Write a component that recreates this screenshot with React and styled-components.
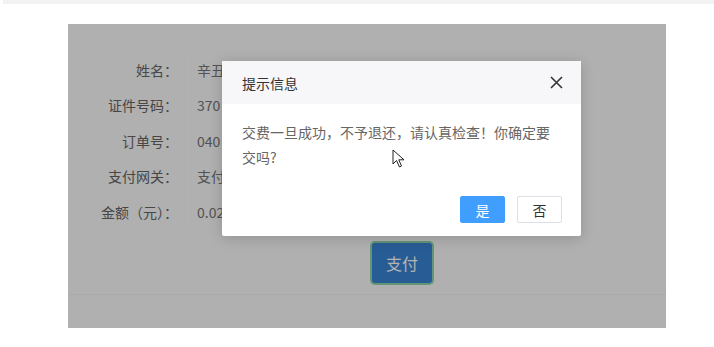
import React from "react";
import styled, { createGlobalStyle } from "styled-components";

const Global = createGlobalStyle`
  html, body {
    margin: 0;
    padding: 0;
    background: #fff;
    font-family: "Noto Sans CJK SC", "Noto Sans", sans-serif;
  }
`;

const TopStrip = styled.div`
  height: 4px;
  margin-left: 3px;
  background: #f2f2f2;
`;

const Panel = styled.div`
  position: relative;
  margin: 20px 0 0 68px;
  width: 598px;
  height: 304px;
  background: #fcfcfc;
  overflow: hidden;
`;

const Form = styled.div`
  display: grid;
  grid-template-columns: 100px 34px;
  grid-auto-rows: 35.5px;
  margin: 28px 0 0 20px;
`;

const Label = styled.div`
  display: flex;
  align-items: center;
  justify-content: flex-end;
  padding-right: 10px;
  font-size: 14px;
  color: #666;
  white-space: nowrap;
`;

const Value = styled.div`
  display: flex;
  align-items: center;
  padding-left: 8px;
  border-left: 1px solid #fff;
  font-size: 14px;
  color: #777;
  white-space: nowrap;
`;

const PayRow = styled.div`
  display: flex;
  padding: 13px 0 0 304px;
`;

const PayButton = styled.button`
  width: 60px;
  height: 40px;
  border: none;
  border-radius: 3px;
  background: #3a84d4;
  box-shadow: 0 0 0 2px #8fd6ab;
  color: #fff;
  font-family: inherit;
  font-size: 16px;
`;

const Rule = styled.div`
  margin-top: 10px;
  height: 1px;
  background: #fff;
  box-shadow: 0 1px 0 #f4f4f4;
`;

const Mask = styled.div`
  position: absolute;
  inset: 0;
  background: rgba(0, 0, 0, 0.3);
`;

const Dialog = styled.div`
  position: absolute;
  left: 154px;
  top: 37px;
  width: 359px;
  background: #fff;
  border-radius: 2px;
  box-shadow: 0 2px 14px rgba(0, 0, 0, 0.18);
`;

const Header = styled.div`
  display: flex;
  align-items: center;
  justify-content: space-between;
  height: 43px;
  padding: 0 20px;
  background: #f7f7f9;
`;

const Title = styled.span`
  font-size: 14px;
  color: #333;
`;

const Close = styled.span`
  display: flex;
  margin-right: -2px;
`;

const Body = styled.div`
  padding: 16px 20px 0;
  font-size: 14px;
  line-height: 25px;
  color: #666;
`;

const Footer = styled.div`
  display: flex;
  justify-content: flex-end;
  gap: 12px;
  padding: 26px 19px 13px;
`;

const DialogButton = styled.button`
  width: 45px;
  height: 27px;
  padding: 0;
  border: 1px solid ${(p) => (p.$primary ? "#409eff" : "#dcdfe6")};
  border-radius: 2px;
  background: ${(p) => (p.$primary ? "#409eff" : "#fff")};
  color: ${(p) => (p.$primary ? "#fff" : "#333")};
  font-family: inherit;
  font-size: 14px;
`;

const Cursor = styled.svg`
  position: absolute;
  left: 324px;
  top: 125px;
`;

const rows = [
  ["姓名：", "辛丑"],
  ["证件号码：", "370"],
  ["订单号：", "040"],
  ["支付网关：", "支付"],
  ["金额（元）：", "0.02"],
];

export default function App() {
  return (
    <>
      <Global />
      <TopStrip />
      <Panel>
        <Form>
          {rows.map(([label, value]) => (
            <React.Fragment key={label}>
              <Label>{label}</Label>
              <Value>{value}</Value>
            </React.Fragment>
          ))}
        </Form>
        <PayRow>
          <PayButton>支付</PayButton>
        </PayRow>
        <Rule />
        <Mask />
        <Dialog>
          <Header>
            <Title>提示信息</Title>
            <Close>
              <svg width="13" height="13" viewBox="0 0 13 13">
                <path d="M1 1L12 12M12 1L1 12" stroke="#333" strokeWidth="1.6" />
              </svg>
            </Close>
          </Header>
          <Body>交费一旦成功，不予退还，请认真检查！你确定要交吗?</Body>
          <Footer>
            <DialogButton $primary>是</DialogButton>
            <DialogButton>否</DialogButton>
          </Footer>
        </Dialog>
        <Cursor width="14" height="20" viewBox="0 0 14 20">
          <path d="M1 1L1 15L4.5 11.5L7.5 18L9.5 17L6.8 10.8L12 10.8Z" fill="#fff" stroke="#222" strokeWidth="1" strokeLinejoin="round" />
        </Cursor>
      </Panel>
    </>
  );
}
